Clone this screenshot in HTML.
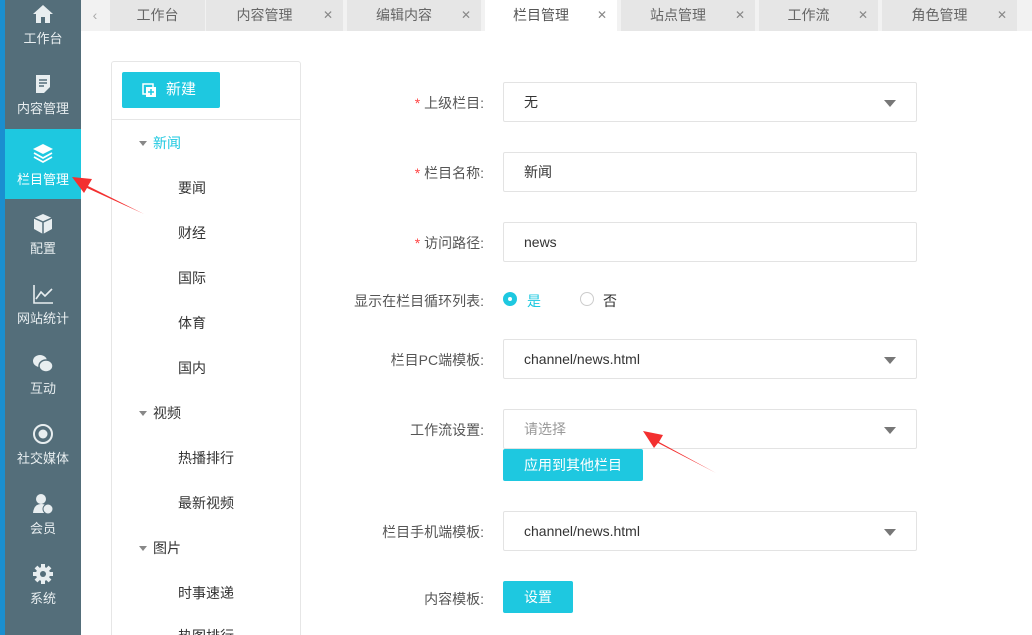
<!DOCTYPE html>
<html style="width:1032px;height:635px;overflow:hidden"><head><meta charset="utf-8"><style>
*{margin:0;padding:0;box-sizing:border-box}
body{width:1032px;height:635px;overflow:hidden;position:relative;background:#fff;font-family:"Liberation Sans","Noto Sans CJK SC",sans-serif;font-size:14px;color:#333}
.abs{position:absolute}
#strip{left:0;top:0;width:5px;height:635px;background:#1a8fd0}
#side{left:5px;top:0;width:76px;height:635px;background:#546e7a}
.nav{position:absolute;left:0;width:76px;height:70px;color:#e8eef0;text-align:center;font-size:13px}
.nav svg{position:absolute;left:27px;top:13px}
.nav span{position:absolute;left:0;right:0;top:38px}
.nav.act{background:#1ec8e0;color:#fff}
#tabs{left:81px;top:0;width:951px;height:31px;background:#f2f2f2}
.tab{position:absolute;top:0;height:31px;background:#e6e6e6;color:#666;font-size:14px;line-height:31px}
.tab .t{position:absolute;left:0;right:20px;text-align:center}
.tab .x{position:absolute;right:10px;font-size:12px;color:#888}
.tab.on{background:#fff;color:#555}
#panel{left:111px;top:61px;width:190px;height:600px;border:1px solid #e6e6e6;border-radius:3px}
.btn{position:absolute;background:#1ec8e0;color:#fff;border-radius:2px;text-align:center}
.tree{position:absolute;font-size:14px;color:#333}
.tri{position:absolute;width:0;height:0;border-left:4px solid transparent;border-right:4px solid transparent;border-top:5px solid #888}
.lbl{position:absolute;right:548px;font-size:14px;color:#555;text-align:right;white-space:nowrap}
.lbl b{color:#f44;font-weight:normal}
.inp{position:absolute;left:503px;width:414px;height:40px;border:1px solid #e3e3e3;border-radius:2px;padding-left:20px;line-height:38px;color:#333}
.caret{position:absolute;right:20px;top:17px;width:0;height:0;border-left:6px solid transparent;border-right:6px solid transparent;border-top:7px solid #777}
</style></head><body>
<div class="abs" id="strip"></div>
<div class="abs" id="side">
 <div class="nav" style="top:-10px"><svg width="22" height="22" viewBox="0 0 22 22"><path d="M11 2 L21 11 H18 V20 H13 V14 H9 V20 H4 V11 H1 Z" fill="#e8eef0"/></svg><span>工作台</span></div>
 <div class="nav" style="top:60px"><svg width="22" height="22" viewBox="0 0 22 22"><path d="M4 2 H18 V14 L12 20 H4 Z" fill="#e8eef0"/><path d="M7 7H15M7 10H15M7 13H12" stroke="#546e7a" stroke-width="1.6"/></svg><span>内容管理</span></div>
 <div class="nav act" style="top:129px;height:70px"><svg width="22" height="22" viewBox="0 0 22 22"><path d="M11 2 L21 7 L11 12 L1 7 Z" fill="#fff"/><path d="M2 11 L11 16 L20 11 M2 15 L11 20 L20 15" stroke="#fff" stroke-width="1.8" fill="none"/></svg><span style="top:40px">栏目管理</span></div>
 <div class="nav" style="top:200px"><svg width="22" height="22" viewBox="0 0 22 22"><path d="M11 1 L20 5 V16 L11 21 L2 16 V5 Z" fill="#e8eef0"/><path d="M2 5 L11 9 L20 5 M11 9 V21" stroke="#546e7a" stroke-width="1.5" fill="none"/></svg><span>配置</span></div>
 <div class="nav" style="top:270px"><svg width="22" height="22" viewBox="0 0 22 22"><path d="M2 2 V20 H21 M4 16 L9 9 L13 13 L20 6" stroke="#e8eef0" stroke-width="1.6" fill="none"/></svg><span>网站统计</span></div>
 <div class="nav" style="top:340px"><svg width="22" height="22" viewBox="0 0 22 22"><ellipse cx="8" cy="8" rx="7" ry="6" fill="#e8eef0"/><ellipse cx="14" cy="13" rx="7" ry="6" fill="#e8eef0" stroke="#546e7a" stroke-width="1.5"/></svg><span>互动</span></div>
 <div class="nav" style="top:410px"><svg width="22" height="22" viewBox="0 0 22 22"><circle cx="11" cy="11" r="9" stroke="#e8eef0" stroke-width="2" fill="none"/><circle cx="11" cy="11" r="4.5" fill="#e8eef0"/></svg><span>社交媒体</span></div>
 <div class="nav" style="top:480px"><svg width="22" height="22" viewBox="0 0 22 22"><circle cx="9" cy="6" r="5" fill="#e8eef0"/><path d="M1 20 Q2 11 9 11 Q13 11 14 13 L12 20 Z" fill="#e8eef0"/><circle cx="16" cy="16" r="5" fill="#e8eef0" stroke="#546e7a"/></svg><span>会员</span></div>
 <div class="nav" style="top:550px"><svg width="22" height="22" viewBox="0 0 22 22"><circle cx="11" cy="11" r="7" fill="#e8eef0"/><path d="M11 1V21M1 11H21M4 4L18 18M18 4L4 18" stroke="#e8eef0" stroke-width="4"/><circle cx="11" cy="11" r="3" fill="#546e7a"/></svg><span>系统</span></div>
 <div class="nav" style="top:620px"><svg width="22" height="22" viewBox="0 0 22 22"><circle cx="11" cy="11" r="8" stroke="#e8eef0" stroke-width="2" fill="none"/></svg></div>
</div>
<div class="abs" id="tabs">
 <div class="tab" style="left:0;width:28px;background:#f2f2f2;color:#aaa;text-align:center">‹</div>
 <div class="tab" style="left:29px;width:95px"><span class="t" style="right:0">工作台</span></div>
 <div class="tab" style="left:125px;width:137px"><span class="t">内容管理</span><span class="x">✕</span></div>
 <div class="tab" style="left:266px;width:134px"><span class="t">编辑内容</span><span class="x">✕</span></div>
 <div class="tab on" style="left:404px;width:132px"><span class="t">栏目管理</span><span class="x">✕</span></div>
 <div class="tab" style="left:540px;width:134px"><span class="t">站点管理</span><span class="x">✕</span></div>
 <div class="tab" style="left:678px;width:119px"><span class="t">工作流</span><span class="x">✕</span></div>
 <div class="tab" style="left:801px;width:135px"><span class="t">角色管理</span><span class="x">✕</span></div>
</div>
<div class="abs" id="panel"></div>
<div class="btn" style="left:122px;top:72px;width:98px;height:36px;line-height:36px;font-size:15px;padding-left:20px">新建
 <svg style="position:absolute;left:20px;top:11px" width="15" height="15" viewBox="0 0 15 15"><rect x="1" y="1" width="10" height="10" fill="none" stroke="#fff" stroke-width="1.5"/><rect x="4" y="4" width="10" height="10" fill="#fff"/><path d="M9 6V12M6 9H12" stroke="#1ec8e0" stroke-width="1.5"/></svg></div>
<div class="abs" style="left:112px;top:119px;width:188px;height:1px;background:#e6e6e6"></div>
<div class="tri" style="left:139px;top:141px"></div><div class="tree" style="left:153px;top:133px;color:#1ec8e0">新闻</div>
<div class="tree" style="left:178px;top:178px">要闻</div>
<div class="tree" style="left:178px;top:223px">财经</div>
<div class="tree" style="left:178px;top:268px">国际</div>
<div class="tree" style="left:178px;top:313px">体育</div>
<div class="tree" style="left:178px;top:358px">国内</div>
<div class="tri" style="left:139px;top:411px"></div><div class="tree" style="left:153px;top:403px">视频</div>
<div class="tree" style="left:178px;top:448px">热播排行</div>
<div class="tree" style="left:178px;top:493px">最新视频</div>
<div class="tri" style="left:139px;top:546px"></div><div class="tree" style="left:153px;top:538px">图片</div>
<div class="tree" style="left:178px;top:583px">时事速递</div>
<div class="tree" style="left:178px;top:626px">热图排行</div>

<div class="lbl" style="top:93px"><b>*</b> 上级栏目:</div>
<div class="inp" style="top:82px">无<div class="caret"></div></div>
<div class="lbl" style="top:163px"><b>*</b> 栏目名称:</div>
<div class="inp" style="top:152px">新闻</div>
<div class="lbl" style="top:233px"><b>*</b> 访问路径:</div>
<div class="inp" style="top:222px">news</div>
<div class="lbl" style="top:291px">显示在栏目循环列表:</div>
<div class="abs" style="left:503px;top:292px;width:14px;height:14px;border-radius:50%;background:#1ec8e0"><div class="abs" style="left:5px;top:5px;width:4px;height:4px;border-radius:50%;background:#fff"></div></div>
<div class="abs" style="left:527px;top:291px;color:#1ec8e0">是</div>
<div class="abs" style="left:580px;top:292px;width:14px;height:14px;border-radius:50%;border:1px solid #ccc"></div>
<div class="abs" style="left:603px;top:291px">否</div>
<div class="lbl" style="top:350px">栏目PC端模板:</div>
<div class="inp" style="top:339px">channel/news.html<div class="caret"></div></div>
<div class="lbl" style="top:420px">工作流设置:</div>
<div class="inp" style="top:409px;color:#999">请选择<div class="caret"></div></div>
<div class="btn" style="left:503px;top:449px;width:140px;height:32px;line-height:32px">应用到其他栏目</div>
<div class="lbl" style="top:522px">栏目手机端模板:</div>
<div class="inp" style="top:511px">channel/news.html<div class="caret"></div></div>
<div class="lbl" style="top:589px">内容模板:</div>
<div class="btn" style="left:503px;top:581px;width:70px;height:32px;line-height:32px">设置</div>

<svg class="abs" style="left:0;top:0" width="1032" height="635">
 <path d="M144 214 L88 186 L92 179 L72 177 L84 193 L87 188 Z" fill="#f33030"/>
 <path d="M716 473 L659 442 L663 435 L643 431 L654 448 L658 443 Z" fill="#f33030"/>
</svg>
</body></html>
